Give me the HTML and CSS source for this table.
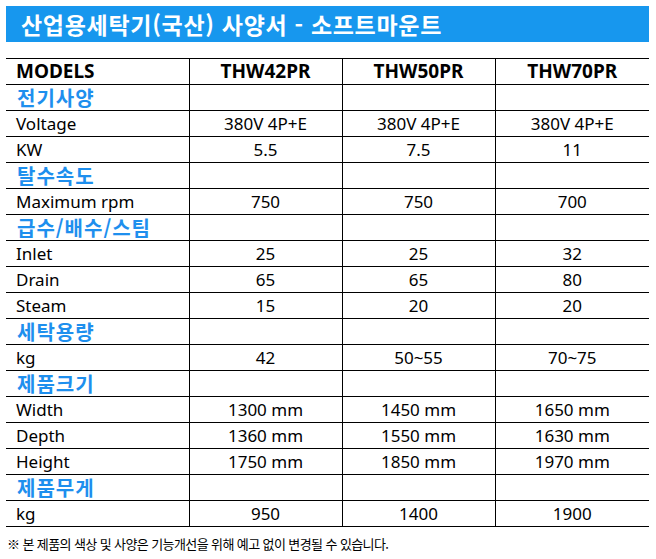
FILE: index.html
```html
<!DOCTYPE html>
<html lang="ko">
<head>
<meta charset="utf-8">
<title>산업용세탁기(국산) 사양서 - 소프트마운트</title>
<link rel="stylesheet" href="styles.css">
</head>
<body>
<div class="page">
  <h1 class="title">산업용세탁기(국산) 사양서 - 소프트마운트</h1>
  <table class="spec">
    <colgroup>
      <col class="c1"><col class="c2"><col class="c3"><col class="c4">
    </colgroup>
    <tr class="head"><th>MODELS</th><th>THW42PR</th><th>THW50PR</th><th>THW70PR</th></tr>
    <tr class="sec"><td>전기사양</td><td></td><td></td><td></td></tr>
    <tr><td>Voltage</td><td>380V 4P+E</td><td>380V 4P+E</td><td>380V 4P+E</td></tr>
    <tr><td>KW</td><td>5.5</td><td>7.5</td><td>11</td></tr>
    <tr class="sec"><td>탈수속도</td><td></td><td></td><td></td></tr>
    <tr><td>Maximum rpm</td><td>750</td><td>750</td><td>700</td></tr>
    <tr class="sec"><td>급수/배수/스팀</td><td></td><td></td><td></td></tr>
    <tr><td>Inlet</td><td>25</td><td>25</td><td>32</td></tr>
    <tr><td>Drain</td><td>65</td><td>65</td><td>80</td></tr>
    <tr><td>Steam</td><td>15</td><td>20</td><td>20</td></tr>
    <tr class="sec"><td>세탁용량</td><td></td><td></td><td></td></tr>
    <tr><td>kg</td><td>42</td><td>50~55</td><td>70~75</td></tr>
    <tr class="sec"><td>제품크기</td><td></td><td></td><td></td></tr>
    <tr><td>Width</td><td>1300 mm</td><td>1450 mm</td><td>1650 mm</td></tr>
    <tr><td>Depth</td><td>1360 mm</td><td>1550 mm</td><td>1630 mm</td></tr>
    <tr><td>Height</td><td>1750 mm</td><td>1850 mm</td><td>1970 mm</td></tr>
    <tr class="sec"><td>제품무게</td><td></td><td></td><td></td></tr>
    <tr><td>kg</td><td>950</td><td>1400</td><td>1900</td></tr>
  </table>
  <p class="note">※ 본 제품의 색상 및 사양은 기능개선을 위해 예고 없이 변경될 수 있습니다.</p>
</div>
</body>
</html>
```
FILE: styles.css
```css
html, body {
  margin: 0;
  padding: 0;
  background: #ffffff;
}
body {
  font-family: "Noto Sans", "Noto Sans CJK KR", sans-serif;
  color: #000;
}
.page {
  width: 643px;
  margin: 6px 0 0 6px;
}
.title {
  margin: 0;
  height: 36px;
  background: #1797ee;
  color: #ffffff;
  font-family: "Noto Sans CJK KR", sans-serif;
  font-weight: 700;
  font-size: 23px;
  letter-spacing: 0.7px;
  line-height: 36px;
  padding-left: 15px;
}
.spec {
  margin-top: 16px;
  width: 643px;
  border-collapse: collapse;
  table-layout: fixed;
  font-size: 17px;
}
.c1 { width: 183px; }
.c2 { width: 153px; }
.c3 { width: 153px; }
.c4 { width: 154px; }
.spec tr {
  height: 26px;
  border-top: 1px solid #000;
  border-bottom: 1px solid #000;
}
.spec td, .spec th {
  padding: 0;
  height: 25px;
  line-height: 25px;
  text-align: center;
  white-space: nowrap;
  border-left: 1px solid #000;
}
.spec td:first-child, .spec th:first-child {
  text-align: left;
  padding-left: 10px;
  border-left: none;
}
.head th {
  font-weight: 700;
  font-size: 19px;
}
.sec td:first-child {
  color: #1e8fee;
  font-family: "Noto Sans CJK KR", sans-serif;
  font-weight: 700;
  font-size: 20px;
  padding-left: 11px;
  letter-spacing: 1px;
}
.note {
  margin: 7px 0 0 1px;
  font-family: "Noto Sans CJK KR", sans-serif;
  font-size: 13px;
  line-height: 20px;
  letter-spacing: -0.6px;
  color: #000;
}
```
